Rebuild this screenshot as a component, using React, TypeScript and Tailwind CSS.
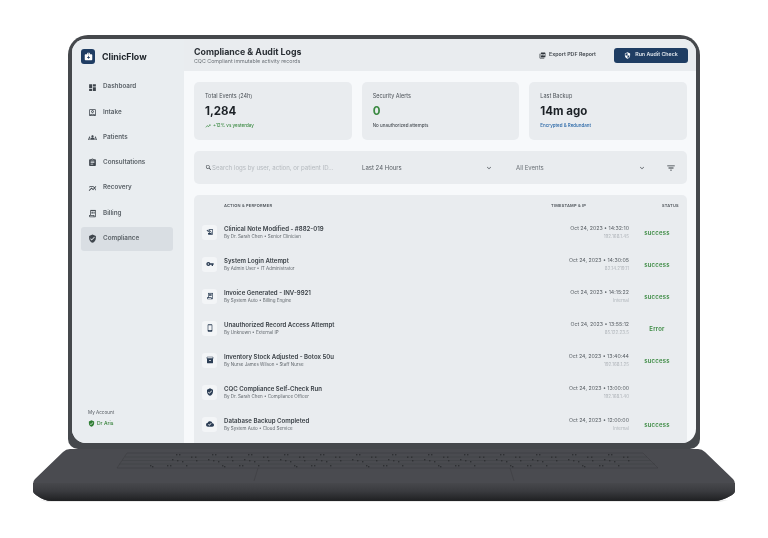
import {
  MdAssignment,
  MdCloudDone,
  MdDashboard,
  MdExpandMore,
  MdFilterList,
  MdGroups,
  MdHistoryEdu,
  MdInventory2,
  MdMedicalServices,
  MdMultilineChart,
  MdOutlineAccountBox,
  MdOutlinePhoneAndroid,
  MdOutlineReceiptLong,
  MdPictureAsPdf,
  MdSearch,
  MdSecurity,
  MdTrendingUp,
  MdVerifiedUser,
  MdVpnKey,
} from 'react-icons/md';

const NAV_ITEMS = [
  { label: 'Dashboard', icon: MdDashboard },
  { label: 'Intake', icon: MdOutlineAccountBox },
  { label: 'Patients', icon: MdGroups },
  { label: 'Consultations', icon: MdAssignment },
  { label: 'Recovery', icon: MdMultilineChart },
  { label: 'Billing', icon: MdOutlineReceiptLong },
  { label: 'Compliance', icon: MdVerifiedUser, active: true },
];

const LOGS = [
  { title: 'Clinical Note Modified - #882-019', by: 'By Dr. Sarah Chen • Senior Clinician', time: 'Oct 24, 2023 • 14:32:10', ip: '192.168.1.45', status: 'success', icon: MdHistoryEdu },
  { title: 'System Login Attempt', by: 'By Admin User • IT Administrator', time: 'Oct 24, 2023 • 14:30:05', ip: '82.14.219.11', status: 'success', icon: MdVpnKey },
  { title: 'Invoice Generated - INV-9921', by: 'By System Auto • Billing Engine', time: 'Oct 24, 2023 • 14:15:22', ip: 'Internal', status: 'success', icon: MdOutlineReceiptLong },
  { title: 'Unauthorized Record Access Attempt', by: 'By Unknown • External IP', time: 'Oct 24, 2023 • 13:55:12', ip: '85.122.23.5', status: 'Error', icon: MdOutlinePhoneAndroid },
  { title: 'Inventory Stock Adjusted - Botox 50u', by: 'By Nurse James Wilson • Staff Nurse', time: 'Oct 24, 2023 • 13:40:44', ip: '192.168.1.25', status: 'success', icon: MdInventory2 },
  { title: 'CQC Compliance Self-Check Run', by: 'By Dr. Sarah Chen • Compliance Officer', time: 'Oct 24, 2023 • 13:00:00', ip: '192.168.1.40', status: '', icon: MdVerifiedUser },
  { title: 'Database Backup Completed', by: 'By System Auto • Cloud Service', time: 'Oct 24, 2023 • 12:00:00', ip: 'Internal', status: 'success', icon: MdCloudDone },
];

const KEY_DOTS: [number, number][] = [];
for (let i = 0; i < 13; i++) {
  const x = 176 + i * 36;
  KEY_DOTS.push([x, 454], [x + 3, 454], [x + 15, 456.5], [x + 19, 456.5], [x - 4, 459], [x + 1, 460], [x + 6, 461], [x + 20, 460]);
  if (i % 2 === 0) KEY_DOTS.push([x - 26, 465], [x - 24, 466], [x - 9, 465], [x - 6, 465], [x + 10, 465]);
}

const Stat = ({ label, value, valueClass, children }: { label: string; value: string; valueClass: string; children: React.ReactNode }) => (
  <div className="flex h-[58px] flex-col rounded-[5px] bg-[#e9ecef] px-[11px] pt-[11px]">
    <div className="text-[5.5px] leading-[7px] text-[#4a5056]">{label}</div>
    <div className={`mt-[3px] text-[11.5px] font-bold leading-[17px] ${valueClass}`}>{value}</div>
    <div className="mt-[3px] flex items-center gap-[2px] text-[4.5px] font-medium leading-[6px]">{children}</div>
  </div>
);

const Laptop = () => (
  <div className="ml-[68px] mt-[35px] flex h-[414px] w-[632px] rounded-t-[20px] rounded-b-[10px] bg-[#45484c] p-[4px] pb-[6px]">
    <div className="flex w-full overflow-hidden rounded-[14px] bg-[#f7f9fb]">
      <aside className="flex w-[112px] shrink-0 flex-col bg-[#e9edf0] pb-[16px] pl-[9px] pr-[11px] pt-[10px]">
        <div className="flex items-center gap-[7px]">
          <div className="flex h-[15px] w-[14px] items-center justify-center rounded-[3px] bg-[#1f3d63] text-white">
            <MdMedicalServices size={9} />
          </div>
          <span className="text-[8.8px] font-bold text-[#20262c]">ClinicFlow</span>
        </div>
        <nav className="mt-[11px] flex flex-col gap-[1.3px]">
          {NAV_ITEMS.map(({ label, icon: Icon, active }) => (
            <div key={label} className={`flex h-[24px] items-center gap-[6px] rounded-[3px] pl-[7px] ${active ? 'bg-[#d9dee3]' : ''}`}>
              <Icon size={9} className="text-[#3f464d]" />
              <span className="text-[6.3px] font-semibold text-[#5c6369]">{label}</span>
            </div>
          ))}
        </nav>
        <div className="mt-auto pl-[7px]">
          <div className="text-[4.6px] text-[#565c62]">My Account</div>
          <div className="mt-[3px] flex items-center gap-[2px] text-[5px] font-medium text-[#2e7d32]">
            <MdVerifiedUser size={7} />
            Dr Aris
          </div>
        </div>
      </aside>

      <main className="flex min-w-0 flex-1 flex-col overflow-hidden">
        <header className="flex h-[32px] shrink-0 items-center justify-between bg-[#e9ecef] pl-[10px] pr-[8px]">
          <div>
            <div className="text-[8.8px] font-bold leading-[11px] text-[#2a2f35]">Compliance &amp; Audit Logs</div>
            <div className="mt-[1px] text-[5.3px] leading-[7px] text-[#6a7076]">CQC Compliant immutable activity records</div>
          </div>
          <div className="flex items-center gap-[18px]">
            <div className="flex items-center gap-[3px] text-[5.3px] font-semibold text-[#42484e]">
              <MdPictureAsPdf size={7} className="text-[#30363c]" />
              Export PDF Report
            </div>
            <div className="flex h-[15px] w-[74px] items-center justify-center gap-[4px] rounded-[3px] bg-[#1f3d63] text-[5.3px] font-semibold text-[#dfe5ec]">
              <MdSecurity size={7} className="text-white" />
              Run Audit Check
            </div>
          </div>
        </header>

        <div className="flex min-h-0 flex-1 flex-col gap-[11px] pl-[10px] pr-[9px] pt-[11px]">
          <div className="grid grid-cols-3 gap-[10px]">
            <Stat label="Total Events (24h)" value="1,284" valueClass="text-[#1c2126]">
              <MdTrendingUp size={6} className="text-[#3b8a42]" />
              <span className="text-[#3b8a42]">+12% vs yesterday</span>
            </Stat>
            <Stat label="Security Alerts" value="0" valueClass="text-[#3b8a42]">
              <span className="text-[#4a5056]">No unauthorized attempts</span>
            </Stat>
            <Stat label="Last Backup" value="14m ago" valueClass="text-[#1c2126]">
              <span className="text-[#2a68a8]">Encrypted &amp; Redundant</span>
            </Stat>
          </div>

          <div className="flex h-[33px] shrink-0 items-center rounded-[5px] bg-[#e9ecef] text-[6px]">
            <div className="flex w-[168px] items-center pl-[11px] text-[#b4b9be]">
              <MdSearch size={7} className="text-[#30363c]" />
              <span className="text-[6.1px]">Search logs by user, action, or patient ID...</span>
            </div>
            <div className="flex w-[154px] items-center justify-between pr-[23px] text-[#565c62]">
              Last 24 Hours
              <MdExpandMore size={8} className="text-[#4a5056]" />
            </div>
            <div className="flex w-[130px] items-center justify-between text-[#6a7076]">
              All Events
              <MdExpandMore size={8} className="text-[#4a5056]" />
            </div>
            <MdFilterList size={10} className="ml-[20px] text-[#30363c]" />
          </div>

          <div className="min-h-0 flex-1 overflow-hidden rounded-t-[5px] bg-[#e9ecef]">
            <div className="flex h-[21px] items-center text-[4px] font-semibold uppercase tracking-[0.2px] text-[#4d5359]">
              <span className="ml-[30px] w-[327px]">Action &amp; Performer</span>
              <span className="w-[111px]">Timestamp &amp; IP</span>
              <span>Status</span>
            </div>
            {LOGS.map(({ title, by, time, ip, status, icon: Icon }) => (
              <div key={title} className="flex h-[32px] items-center">
                <div className="ml-[8px] flex h-[15px] w-[15px] items-center justify-center rounded-[3px] bg-[#f3f5f7] text-[#2c3e55]">
                  <Icon size={8} />
                </div>
                <div className="ml-[7px] w-[200px]">
                  <div className="text-[6.1px] font-semibold leading-[9px] text-[#3a4046]">{title}</div>
                  <div className="mt-[1px] text-[4.5px] leading-[6px] text-[#62686e]">{by}</div>
                </div>
                <div className="w-[205px] text-right">
                  <div className="text-[5.25px] leading-[9px] text-[#5a6066]">{time}</div>
                  <div className="mt-[1px] text-[4.5px] leading-[6px] text-[#b0b5ba]">{ip}</div>
                </div>
                <div className="ml-[10px] w-[36px] text-center text-[6px] font-semibold tracking-[0.2px] text-[#3b8a42]">{status}</div>
              </div>
            ))}
          </div>
        </div>
      </main>
    </div>
  </div>
);

const LaptopBase = () => (
  <svg className="-mt-[1px] ml-[30px] block" width="708" height="56" viewBox="30 448 708 56">
    <defs>
      <linearGradient id="lip" x1="0" y1="0" x2="0" y2="1">
        <stop offset="0" stopColor="#47484c" />
        <stop offset="0.45" stopColor="#3a3b3f" />
        <stop offset="1" stopColor="#1f2022" />
      </linearGradient>
    </defs>
    <path d="M48 502H720L728 500H40Z" fill="#000" opacity="0.08" />
    <path d="M70 449H698Q702 449 705 452L733 479Q735 481 735 484V491Q735 493 732 495Q722 501 714 501H52Q44 501 36 495Q33 493 33 491V484Q33 481 35 479L63 452Q66 449 70 449Z" fill="#4a4b50" />
    <path d="M33 483H735V491Q735 493 732 495Q722 501 714 501H52Q44 501 36 495Q33 493 33 491Z" fill="url(#lip)" />
    <g fill="none" stroke="#3a3b3e" strokeWidth="0.5">
      <path d="M127 453H643L658 468H117Z" />
      <path d="M125 457H647M122 460.5H651M119 464H655" opacity="0.8" />
      <path d="M258 468L254 481M510 468L514 481" />
    </g>
    <g fill="#2f3033">
      {KEY_DOTS.map(([x, y], i) => (
        <rect key={i} x={x} y={y} width="1.4" height="1.4" />
      ))}
    </g>
  </svg>
);

export default function App() {
  return (
    <div className="h-[538px] w-[768px] overflow-hidden bg-white blur-[0.3px] [font-family:Inter,'Noto_Sans',sans-serif]">
      <Laptop />
      <LaptopBase />
    </div>
  );
}
